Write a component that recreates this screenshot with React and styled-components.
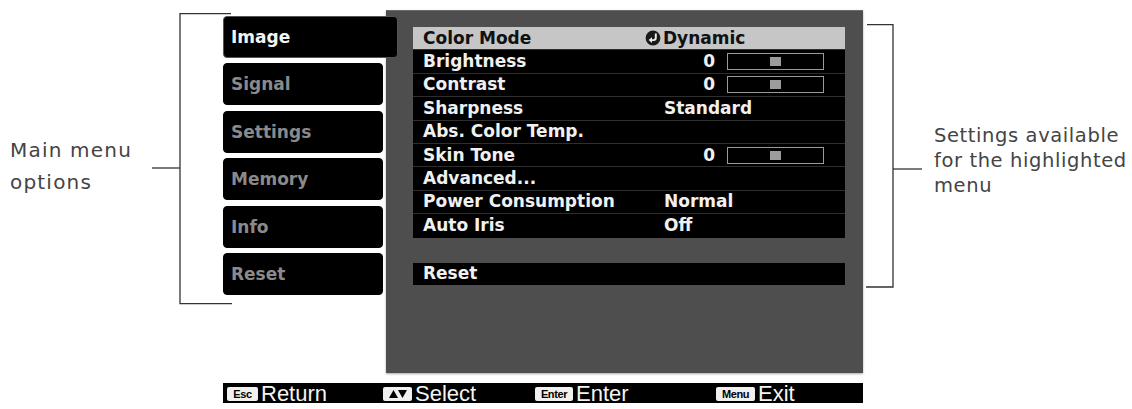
import React from "react";
import styled, { createGlobalStyle } from "styled-components";

const GlobalStyle = createGlobalStyle`
  html, body {
    margin: 0;
    padding: 0;
    background: #fff;
  }
  body {
    width: 1132px;
    height: 409px;
    overflow: hidden;
  }
`;

const Page = styled.div`
  display: flex;
  align-items: flex-start;
  width: 1132px;
  height: 409px;
  padding-left: 10px;
  box-sizing: border-box;
  background: #fff;
`;

const Note = styled.div`
  flex: none;
  width: ${p => p.$width}px;
  margin-top: ${p => p.$top}px;
  margin-left: ${p => p.$left || 0}px;
  font-family: "DejaVu Sans", sans-serif;
  font-size: ${p => p.$size}px;
  line-height: ${p => p.$lh}px;
  letter-spacing: ${p => p.$ls}px;
  color: #444;
  white-space: nowrap;
`;

const Callout = styled.svg`
  flex: none;
  display: block;
  overflow: visible;
  margin-top: ${p => p.$top}px;
`;

const Screen = styled.div`
  flex: none;
  width: 640px;
  margin-top: 10px;
  display: flex;
  flex-direction: column;
`;

const TopRow = styled.div`
  display: flex;
  gap: 3px;
`;

const Tabs = styled.div`
  position: relative;
  z-index: 1;
  width: 160px;
  padding-top: 6px;
  display: flex;
  flex-direction: column;
  gap: 5.4px;
`;

const Tab = styled.div`
  width: ${p => (p.$active ? 175 : 160)}px;
  height: 42px;
  box-sizing: border-box;
  display: flex;
  align-items: center;
  padding-left: 7px;
  background: #000;
  border: 1px solid ${p => (p.$active ? "#555" : "#000")};
  border-radius: 4px;
  font: bold 17px "DejaVu Sans", sans-serif;
  color: ${p => (p.$active ? "#f4f4f4" : "#8a8a8a")};
`;

const Panel = styled.div`
  flex: none;
  width: 477px;
  height: 363px;
  box-sizing: border-box;
  padding: 16px 18px 0 27px;
  background: #4e4e4e;
  border-top: 1px solid #6b6b6b;
  box-shadow: 0 1px 2px rgba(0, 0, 0, 0.35);
`;

const List = styled.div`
  background: #000;
`;

const Row = styled.div`
  height: 23.4px;
  box-sizing: border-box;
  display: grid;
  grid-template-columns: 251px 1fr;
  align-items: center;
  border-bottom: 1px solid ${p => (p.$last ? "#000" : "#2e2e2e")};
  background: ${p => (p.$hl ? "#c6c6c6" : "#000")};
  color: ${p => (p.$hl ? "#111" : "#f0f0f0")};
  font: bold 17px/1 "DejaVu Sans", sans-serif;
`;

const Label = styled.div`
  padding-left: 10px;
  white-space: nowrap;
`;

const Value = styled.div`
  display: flex;
  align-items: center;
  white-space: nowrap;
`;

const Num = styled.span`
  width: 51px;
  text-align: right;
`;

const Slider = styled.div`
  width: 97px;
  height: 17px;
  margin-left: 12px;
  box-sizing: border-box;
  border: 1.5px solid #9a9a9a;
  display: flex;
  align-items: center;
  justify-content: center;
`;

const Knob = styled.div`
  width: 11px;
  height: 9px;
  background: #9c9c9c;
`;

const BackIcon = styled.svg`
  width: 16px;
  height: 16px;
  margin-left: -19px;
  margin-right: 2px;
  flex: none;
`;

const ResetBar = styled(Row)`
  margin-top: 25px;
  height: 22px;
  border-bottom: none;
`;

const Footer = styled.div`
  margin-top: 10px;
  height: 20px;
  box-sizing: border-box;
  padding-left: 4px;
  display: grid;
  grid-template-columns: 156px 152px 181px 1fr;
  align-items: center;
  background: #000;
  font-family: "Liberation Sans", Arial, sans-serif;
  font-size: 22px;
  color: #f4f4f4;
`;

const FootItem = styled.div`
  display: flex;
  align-items: center;
  gap: 3px;
  height: 20px;
  line-height: 20px;
  padding-top: 2px;
  box-sizing: border-box;
`;

const KeyCap = styled.span`
  flex: none;
  width: ${p => p.$w}px;
  height: 14px;
  box-sizing: border-box;
  display: flex;
  align-items: center;
  justify-content: center;
  background: #f0f0f0;
  border-radius: 2px;
  color: #000;
  font: bold 11px/1 "Liberation Sans", Arial, sans-serif;
  letter-spacing: -0.4px;
`;

const rows = [
  { label: "Color Mode", value: "Dynamic", icon: true, hl: true },
  { label: "Brightness", num: "0" },
  { label: "Contrast", num: "0" },
  { label: "Sharpness", value: "Standard" },
  { label: "Abs. Color Temp." },
  { label: "Skin Tone", num: "0" },
  { label: "Advanced..." },
  { label: "Power Consumption", value: "Normal" },
  { label: "Auto Iris", value: "Off" }
];

const tabs = ["Image", "Signal", "Settings", "Memory", "Info", "Reset"];

const Back = () => (
  <BackIcon viewBox="0 0 16 16">
    <circle cx="8" cy="8" r="7.4" fill="#1a1a1a" />
    <path
      d="M10.8 3.6 V7.8 A2.3 2.3 0 0 1 8.5 10.1 H5"
      fill="none"
      stroke="#eee"
      strokeWidth="1.9"
    />
    <path d="M7 7.2 L3.6 10.1 L7 13 Z" fill="#eee" />
  </BackIcon>
);

const UpDown = () => (
  <svg width="20" height="10" viewBox="0 0 20 10">
    <path d="M1 9 L5.5 1 L10 9 Z" fill="#000" />
    <path d="M10 1 L19 1 L14.5 9 Z" fill="#000" />
  </svg>
);

export default function App() {
  return (
    <>
      <GlobalStyle />
      <Page>
        <Note $width={142} $top={134} $lh={32} $size={20} $ls={1.2}>
          Main menu
          <br />
          options
        </Note>
        <Callout $top={13} width="71" height="292">
          <g stroke="#333" strokeWidth="1.3" fill="none">
            <path d="M79 0.6 H28 V290.6 H80" />
            <path d="M0 155 H28" />
          </g>
        </Callout>
        <Screen>
          <TopRow>
            <Tabs>
              {tabs.map((t, i) => (
                <Tab key={t} $active={i === 0}>
                  {t}
                </Tab>
              ))}
            </Tabs>
            <Panel>
              <List>
                {rows.map((r, i) => (
                  <Row key={r.label} $hl={r.hl} $last={i === rows.length - 1}>
                    <Label>{r.label}</Label>
                    <Value>
                      {r.icon && <Back />}
                      {r.value}
                      {r.num && (
                        <>
                          <Num>{r.num}</Num>
                          <Slider>
                            <Knob />
                          </Slider>
                        </>
                      )}
                    </Value>
                  </Row>
                ))}
              </List>
              <ResetBar>
                <Label>Reset</Label>
              </ResetBar>
            </Panel>
          </TopRow>
          <Footer>
            <FootItem>
              <KeyCap $w={31}>Esc</KeyCap>
              Return
            </FootItem>
            <FootItem>
              <KeyCap $w={29}>
                <UpDown />
              </KeyCap>
              Select
            </FootItem>
            <FootItem>
              <KeyCap $w={38}>Enter</KeyCap>
              Enter
            </FootItem>
            <FootItem>
              <KeyCap $w={39}>Menu</KeyCap>
              Exit
            </FootItem>
          </Footer>
        </Screen>
        <Callout $top={24} width="59" height="264">
          <g stroke="#333" strokeWidth="1.3" fill="none">
            <path d="M4 0.6 H30 V263 H3" />
            <path d="M30 145 H59" />
          </g>
        </Callout>
        <Note $width={198} $top={123} $left={12} $lh={25} $size={19.5} $ls={0.6}>
          Settings available
          <br />
          for the highlighted
          <br />
          menu
        </Note>
      </Page>
    </>
  );
}
